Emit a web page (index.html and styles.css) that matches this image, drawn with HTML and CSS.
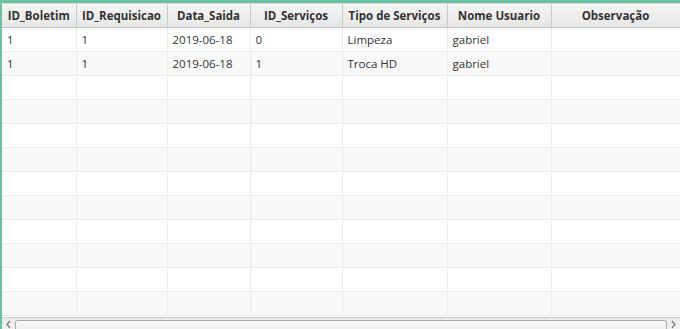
FILE: index.html
```html
<!DOCTYPE html>
<html>
<head>
<meta charset="utf-8">
<link rel="stylesheet" href="styles.css">
</head>
<body>
<div class="frame">
  <div class="table-wrap">
    <table class="grid">
      <colgroup>
        <col class="c1"><col class="c2"><col class="c3"><col class="c4"><col class="c5"><col class="c6"><col class="c7">
      </colgroup>
      <thead>
        <tr>
          <th>ID_Boletim</th><th>ID_Requisicao</th><th>Data_Saida</th><th>ID_Serviços</th><th>Tipo de Serviços</th><th>Nome Usuario</th><th>Observação</th>
        </tr>
      </thead>
      <tbody>
        <tr><td>1</td><td>1</td><td>2019-06-18</td><td>0</td><td>Limpeza</td><td>gabriel</td><td></td></tr>
        <tr><td>1</td><td>1</td><td>2019-06-18</td><td>1</td><td>Troca HD</td><td>gabriel</td><td></td></tr>
        <tr><td></td><td></td><td></td><td></td><td></td><td></td><td></td></tr>
        <tr><td></td><td></td><td></td><td></td><td></td><td></td><td></td></tr>
        <tr><td></td><td></td><td></td><td></td><td></td><td></td><td></td></tr>
        <tr><td></td><td></td><td></td><td></td><td></td><td></td><td></td></tr>
        <tr><td></td><td></td><td></td><td></td><td></td><td></td><td></td></tr>
        <tr><td></td><td></td><td></td><td></td><td></td><td></td><td></td></tr>
        <tr><td></td><td></td><td></td><td></td><td></td><td></td><td></td></tr>
        <tr><td></td><td></td><td></td><td></td><td></td><td></td><td></td></tr>
        <tr><td></td><td></td><td></td><td></td><td></td><td></td><td></td></tr>
        <tr><td></td><td></td><td></td><td></td><td></td><td></td><td></td></tr>
      </tbody>
    </table>
  </div>
  <div class="hscroll">
    <svg class="arrow" width="11" height="11" viewBox="0 0 11 11"><path d="M7 3 L4 6.5 L7 10" fill="none" stroke="#777" stroke-width="1.2"/></svg>
    <div class="track"><div class="thumb"></div></div>
    <svg class="arrow" width="11" height="11" viewBox="0 0 11 11"><path d="M4 3 L7 6.5 L4 10" fill="none" stroke="#777" stroke-width="1.2"/></svg>
  </div>
</div>
</body>
</html>
```
FILE: styles.css
```css
html, body {
  margin: 0;
  padding: 0;
  width: 680px;
  height: 329px;
  overflow: hidden;
  background: #ffffff;
}
.frame {
  width: 680px;
  height: 329px;
  box-sizing: border-box;
  border-top: 3px solid #6dc3a0;
  border-left: 2px solid #6dc3a0;
  display: flex;
  flex-direction: column;
  font-family: "Open Sans", "Noto Sans", sans-serif;
  font-size: 11.5px;
  color: #333333;
  overflow: hidden;
}
.table-wrap {
  flex: 1;
  overflow: hidden;
  border-top: 1px solid #d6d6d6;
}
.grid {
  border-collapse: collapse;
  table-layout: fixed;
  width: 678px;
}
.c1 { width: 74px; }
.c2 { width: 91px; }
.c3 { width: 83px; }
.c4 { width: 92px; }
.c5 { width: 105px; }
.c6 { width: 104px; }
.c7 { width: 129px; }
.grid th {
  height: 23px;
  padding: 0;
  font-weight: 700;
  text-align: center;
  background: linear-gradient(#f6f6f6, #e6e6e6);
  border-right: 1px solid #c9c9c9;
  border-bottom: 1px solid #c4c4c4;
  white-space: nowrap;
  overflow: hidden;
}
.grid td {
  height: 23px;
  padding: 0 0 0 5px;
  border-right: 1px solid #ececec;
  border-bottom: 1px solid #ececec;
  white-space: nowrap;
  overflow: hidden;
}
.grid tbody tr:nth-child(odd) td { background: #ffffff; }
.grid tbody tr:nth-child(even) td { background: #f9f9f9; }
.hscroll {
  height: 11px;
  flex: none;
  display: flex;
  align-items: flex-start;
  background: linear-gradient(#e9e9e9, #f2f2f2);
  border-top: 1px solid #cfcfcf;
}
.arrow {
  flex: none;
  display: block;
  margin: 0 1px;
}
.track {
  flex: 1;
  height: 11px;
  padding-top: 2px;
  box-sizing: border-box;
}
.thumb {
  height: 12px;
  border: 1px solid #a9a9a9;
  border-radius: 3px;
  background: linear-gradient(#fbfbfb, #e9e9e9);
}
```
